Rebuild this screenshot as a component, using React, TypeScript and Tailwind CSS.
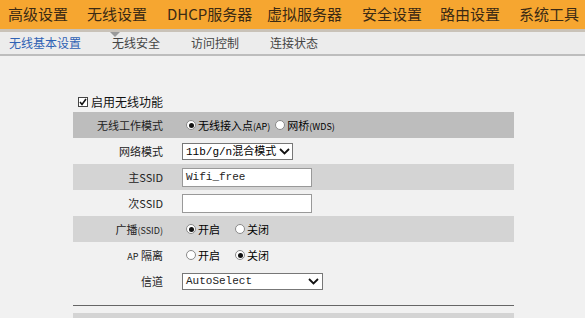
import type { ReactNode } from "react";

const cjk = "font-['Noto_Sans_CJK_SC','Noto_Sans',sans-serif]";
const mono = "font-['Liberation_Mono','Noto_Sans_CJK_SC',monospace]";

const topNav = [
  { label: "高级设置", w: "w-[79px]" },
  { label: "无线设置", w: "w-[80px]" },
  { label: "DHCP服务器", w: "w-[100px]" },
  { label: "虚拟服务器", w: "w-[95px]" },
  { label: "安全设置", w: "w-[78px]" },
  { label: "路由设置", w: "w-[79px]" },
  { label: "系统工具", w: "w-[79px]" },
];

const subNav = ["无线基本设置", "无线安全", "访问控制", "连接状态"];

function Radio({ checked }: { checked?: boolean }) {
  return (
    <span className="flex h-[10px] w-[10px] items-center justify-center rounded-full border border-[#8a8a8a] bg-white">
      {checked && <span className="h-[5px] w-[5px] rounded-full bg-[#111]" />}
    </span>
  );
}

function RadioItem({ checked, children }: { checked?: boolean; children: ReactNode }) {
  return (
    <span className="flex items-center gap-[2px]">
      <Radio checked={checked} />
      <span>{children}</span>
    </span>
  );
}

function Chevron() {
  return (
    <svg width="11" height="7" viewBox="0 0 11 7" className="shrink-0">
      <path d="M1 1 L5.5 5.5 L10 1" fill="none" stroke="#111" strokeWidth="1.8" />
    </svg>
  );
}

function Row({ label, shade, children }: { label: ReactNode; shade?: string; children: ReactNode }) {
  return (
    <div className={`flex h-[26px] items-center ${shade ?? ""}`}>
      <div className="w-[100px] pr-[10px] text-right text-[#222]">{label}</div>
      <div className="flex flex-1 items-center pl-[9px]">{children}</div>
    </div>
  );
}

export default function App() {
  return (
    <div className={`h-[318px] w-[585px] overflow-hidden bg-[#f1f1f1] ${cjk}`}>
      <div className="flex h-[29px] items-center bg-[#f6a630] pl-[8px] text-[15px] text-[#3b2a14]">
        {topNav.map((n) => (
          <span key={n.label} className={`${n.w} shrink-0 whitespace-nowrap`}>
            {n.label}
          </span>
        ))}
      </div>
      <div className="h-[3px] bg-[#c9c2b8]" />
      <div className="relative flex h-[24px] items-center gap-[31px] border-b-[2px] border-[#bdbdbd] bg-[#ececec] pl-[9px] text-[12px] text-[#444]">
        <span className="absolute left-[110px] top-0 h-0 w-0 border-x-[5px] border-t-[5px] border-x-transparent border-t-[#9a9a9a]" />
        {subNav.map((s, i) => (
          <span key={s} className={i === 0 ? "text-[#2f62b4]" : ""}>
            {s}
          </span>
        ))}
      </div>

      <div className="ml-[73px] w-[441px] pt-[36px] text-[11px]">
        <div className="flex h-[20px] items-center gap-[3px] pl-[5px] text-[12px] text-[#111]">
          <span className="flex h-[10px] w-[10px] items-center justify-center border border-[#444] bg-white">
            <svg width="8" height="8" viewBox="0 0 8 8">
              <path d="M1 4 L3 6.5 L7 1" fill="none" stroke="#111" strokeWidth="1.6" />
            </svg>
          </span>
          启用无线功能
        </div>

        <Row label="无线工作模式" shade="bg-[#bdbdbd]">
          <div className="flex items-center gap-[5px] pl-[4px]">
            <RadioItem checked>
              无线接入点<span className="text-[9px]">(AP)</span>
            </RadioItem>
            <RadioItem>
              网桥<span className="text-[9px]">(WDS)</span>
            </RadioItem>
          </div>
        </Row>

        <Row label="网络模式">
          <div className="flex h-[17px] w-[111px] items-center justify-between border border-[#777] bg-white pl-[3px] pr-[2px]">
            <span className={`${mono} text-[11px]`}>
              11b/g/n<span className={cjk}>混合模式</span>
            </span>
            <Chevron />
          </div>
        </Row>

        <Row label="主SSID" shade="bg-[#d4d4d4]">
          <div className={`flex h-[19px] w-[130px] items-center border border-[#999] bg-white pl-[3px] ${mono} text-[11px] text-[#222]`}>
            Wifi_free
          </div>
        </Row>

        <Row label="次SSID">
          <div className="h-[19px] w-[130px] border border-[#999] bg-white" />
        </Row>

        <Row
          label={
            <>
              广播<span className="text-[9px]">(SSID)</span>
            </>
          }
          shade="bg-[#d4d4d4]"
        >
          <div className="flex items-center gap-[15px] pl-[4px]">
            <RadioItem checked>开启</RadioItem>
            <RadioItem>关闭</RadioItem>
          </div>
        </Row>

        <Row
          label={
            <>
              <span className="text-[9px]">AP</span> 隔离
            </>
          }
        >
          <div className="flex items-center gap-[15px] pl-[4px]">
            <RadioItem>开启</RadioItem>
            <RadioItem checked>关闭</RadioItem>
          </div>
        </Row>

        <Row label="信道">
          <div className="flex h-[17px] w-[141px] items-center justify-between border border-[#777] bg-white pl-[3px] pr-[3px]">
            <span className={`${mono} text-[11px] text-[#222]`}>AutoSelect</span>
            <Chevron />
          </div>
        </Row>

        <div className="mt-[11px] h-[1px] bg-[#666]" />
        <div className="mt-[7px] h-[20px] bg-[#d4d4d4]" />
      </div>
    </div>
  );
}
